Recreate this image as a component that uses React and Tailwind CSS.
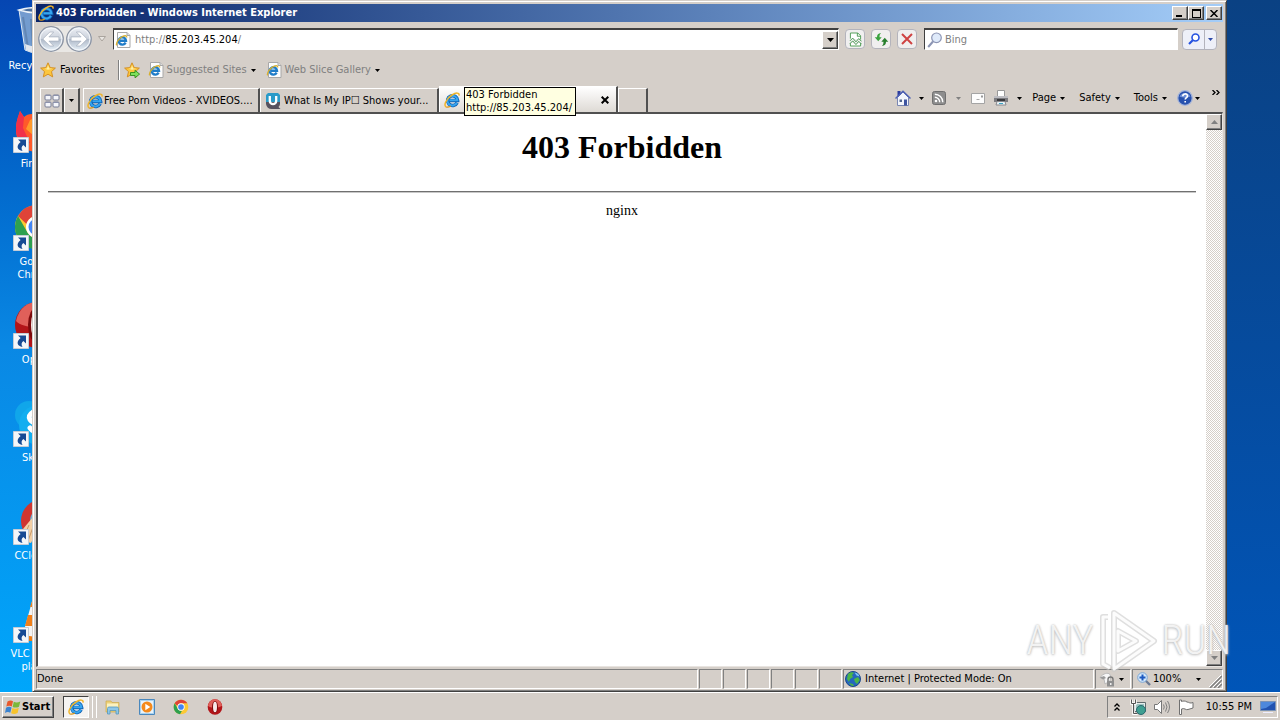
/**
 * Classic Windows desktop with an Internet Explorer window
 */
import { useId } from 'react';

const raised =
  'border border-t-white border-l-white border-r-[#404040] border-b-[#404040] bg-[#d5cfc9] shadow-[inset_-1px_-1px_0_#808080]';
const sunken = 'border border-t-[#808080] border-l-[#808080] border-r-white border-b-white';
const softButton =
  'flex h-5 w-5 items-center justify-center rounded-sm border border-[#b4b4bc] bg-[#f0efef]';

/* ---------- icons ---------- */

const IeIcon = ({ className = 'h-4 w-4' }) => (
  <svg viewBox="0 0 16 16" className={`shrink-0 ${className}`} aria-hidden="true">
    <path d="M13.1 10.8A5 4.900 0 1 1 13.600 8.500H5.500" fill="none" stroke="#0f62b4" strokeWidth="3.600" />
    <path d="M12.900 10.800A5 4.900 0 1 1 13.400 8.300H5.500" fill="none" stroke="#36a6f0" strokeWidth="2" />
    <path
      d="M2.200 15C-1 13.600 2.500 6.500 8 3c4-2.600 7.600-2.600 7 .6"
      fill="none"
      stroke="#f0b429"
      strokeWidth="1.500"
    />
    <path d="M2.200 15c1.600.6 3.300-.2 4.600-1" fill="none" stroke="#d8951b" strokeWidth="1.200" />
  </svg>
);

const PageIeIcon = () => (
  <svg viewBox="0 0 16 16" className="h-4 w-4 shrink-0" aria-hidden="true">
    <path d="M2.500.5h9.500l3 3v12h-12.500z" fill="#fdfdfd" stroke="#a8a8a8" />
    <path d="M12 .5V3.500h3" fill="#ddd" stroke="#a8a8a8" />
    <path d="M10.600 10.600A3.700 3.700 0 1 1 11 8.700H5" fill="none" stroke="#1f7cc8" strokeWidth="2.400" />
    <path d="M1.700 13.300c-1.400-2 2.500-7.700 6.500-9.200 2.500-.8 3.800-.2 3.400 1.400" fill="none" stroke="#d8b02f" strokeWidth="1.300" />
  </svg>
);

const Caret = ({ className = 'text-black' }) => (
  <svg viewBox="0 0 5 3" className={`h-[3px] w-[5px] shrink-0 ${className}`} aria-hidden="true">
    <path d="M0 0h5L2.500 3z" fill="currentColor" />
  </svg>
);

const NavArrow = ({ flip }) => {
  const id = useId();
  return (
    <svg viewBox="0 0 26 26" className={`h-[26px] w-[26px] ${flip ? '-scale-x-100' : ''}`} aria-hidden="true">
      <defs>
        <linearGradient id={id} x1="0" y1="0" x2="0" y2="1">
          <stop offset="0" stopColor="#eef1f6" />
          <stop offset=".48" stopColor="#ccd2dc" />
          <stop offset=".52" stopColor="#b0bac9" />
          <stop offset="1" stopColor="#e9f3fa" />
        </linearGradient>
      </defs>
      <circle cx="13" cy="13" r="12.300" fill={`url(#${id})`} stroke="#8b93a2" strokeWidth="1.200" />
      <circle cx="13" cy="13" r="10.900" fill="none" stroke="#f5f8fb" strokeWidth="1" />
      <path
        d="M4.800 13l7-7h3.900l-4.800 4.900h10v4.200h-10l4.800 4.900h-3.900z"
        fill="#fff"
        stroke="#a4adbc"
        strokeWidth=".7"
      />
    </svg>
  );
};

const StarIcon = ({ arrow }) => (
  <svg viewBox="0 0 16 16" className="h-4 w-4 shrink-0" aria-hidden="true">
    <path
      d="M8 .8l2.200 4.800 5.200.5-3.900 3.500 1.200 5.300L8 12.200l-4.700 2.700 1.200-5.300L.6 6.100l5.200-.5z"
      fill="#fcc63d"
      stroke="#d38a1c"
      strokeWidth=".9"
    />
    <path d="M8 3l1.200 3.400 3.300.4-4.500.9-3.700-.9 2.700-.4z" fill="#fff0a8" />
    {arrow && (
      <path d="M6.500 10.500h4.500V8.300l4.600 3.800-4.600 3.700v-2.300H6.500z" fill="#7fe05c" stroke="#2b8c1d" strokeWidth=".9" />
    )}
  </svg>
);

const QuickTabsIcon = () => (
  <svg viewBox="0 0 16 14" className="h-[14px] w-4" aria-hidden="true">
    {[[1, 1], [9, 1], [1, 8], [9, 8]].map(([x, y]) => (
      <g key={`${x}-${y}`}>
        <rect x={x} y={y} width="6" height="5" rx="1" fill="#f4f5fa" stroke="#777d95" />
        <path d={`M${x} ${y + 0.5}h6`} stroke="#8d93ad" />
      </g>
    ))}
  </svg>
);

const UIcon = () => (
  <svg viewBox="0 0 16 16" className="h-4 w-4 shrink-0" aria-hidden="true">
    <path d="M3 1h10l2 2v8a5 5 0 0 1-1.500 3L15.500 16H7a6 6 0 0 1-6-5V3z" fill="#56525f" />
    <path d="M3 0h10l2 2v7H1V2z" fill="#2a9bc9" />
    <path d="M4.800 12V7a3.200 3.200 0 0 1 6.400 0v5" fill="none" stroke="#fff" strokeWidth="2.300" transform="rotate(180 8 7.500)" />
  </svg>
);

const CompatIcon = () => (
  <svg viewBox="0 0 14 16" className="h-[15px] w-[13px]" aria-hidden="true">
    <path d="M1.500 7V1h8l3 3v4M1.500 12v3h11v-3" fill="#fff" stroke="#4b9b51" />
    <path d="M9 1v3.500h3.500" fill="none" stroke="#4b9b51" />
    <path d="M1 9.500l3-3 3.500 4 3-3.500 3 3M1 12.500l3-3 3.500 4 3-3.500 3 3" fill="none" stroke="#3c9146" />
  </svg>
);

const RefreshIcon = () => (
  <svg viewBox="0 0 16 16" className="h-[15px] w-[15px]" aria-hidden="true">
    <path d="M7.500 1C4.500 1.200 3.200 2.800 3.200 5.500H.8l3.700 4.300 3.700-4.300H5.900C5.800 3.400 6.300 2.300 7.500 1z" fill="#3aa33f" />
    <path d="M8.500 14.800c3-.2 4.300-1.800 4.300-4.500h2.400L11.500 6l-3.700 4.300h2.300c.1 2.100-.4 3.200-1.600 4.500z" fill="#277f2e" />
  </svg>
);

const StopIcon = () => (
  <svg viewBox="0 0 12 12" className="h-3 w-3" aria-hidden="true">
    <path d="M1 1l10 10M11 1L1 11" stroke="#cf4343" strokeWidth="2" />
  </svg>
);

const Magnifier = ({ stroke, fill }) => (
  <svg viewBox="0 0 16 16" className="h-4 w-4 shrink-0" aria-hidden="true">
    <path d="M6 9.500L1.200 15" stroke={stroke} strokeWidth="2" />
    <circle cx="9.500" cy="5.800" r="4.800" fill={fill} stroke={stroke} strokeWidth="1.200" />
  </svg>
);

const HomeIcon = () => (
  <svg viewBox="0 0 16 16" className="h-4 w-4" aria-hidden="true">
    <path d="M2.500 7.500v8h11v-8L8 2z" fill="#f3f6fc" stroke="#7986b2" />
    <path d="M2.500 1h3v3l-3 3z" fill="#2b3da0" />
    <path d="M.5 8.500L8 1.200l7.500 7.300" fill="none" stroke="#4d60b4" strokeWidth="1.500" />
    <path d="M9 9.500h3v6H9z" fill="#3f55a0" />
    <path d="M4.500 9.500h2.500v2.500H4.500z" fill="#53678f" />
  </svg>
);

const FeedIcon = () => (
  <svg viewBox="0 0 14 14" className="h-[14px] w-[14px]" aria-hidden="true">
    <rect x=".5" y=".5" width="13" height="13" rx="2" fill="#8d8d8d" stroke="#6f6f6f" />
    <circle cx="4" cy="10" r="1.300" fill="#fff" />
    <path d="M2.800 6.300a4.900 4.900 0 0 1 4.900 4.900M2.800 3.200a8 8 0 0 1 8 8" fill="none" stroke="#fff" strokeWidth="1.400" />
  </svg>
);

const MailIcon = () => (
  <svg viewBox="0 0 14 11" className="h-[11px] w-[14px]" aria-hidden="true">
    <path d="M.5.5h13v10H.5z" fill="#fdfdfd" stroke="#a4a4a4" />
    <path d="M10 2.500h2v2h-2z" fill="#999" />
    <path d="M5.500 6.500h3" stroke="#aaa" />
  </svg>
);

const PrinterIcon = () => (
  <svg viewBox="0 0 16 16" className="h-4 w-4" aria-hidden="true">
    <path d="M4.500.5h7v6h-7z" fill="#fff" stroke="#9a9a9a" />
    <path d="M1 6h14v6H1z" fill="#7c7c80" />
    <path d="M1 6h14v2H1z" fill="#bdbdc2" />
    <path d="M4 9h8v2H4z" fill="#3a3a3d" />
    <path d="M4 11.500h8l1 3.500H3z" fill="#e9f3f7" stroke="#8a8a8e" />
    <path d="M6 13.500h4" stroke="#3fa4c4" />
  </svg>
);

const HelpIcon = () => (
  <svg viewBox="0 0 16 16" className="h-4 w-4" aria-hidden="true">
    <circle cx="8" cy="8" r="7.300" fill="#2751ae" stroke="#a4b4da" strokeWidth="1.300" />
    <path d="M2.500 6.500a6 6 0 0 1 11 0c-3 1.500-8 1.500-11 0z" fill="#6d8fd8" />
    <path d="M5.800 6.200c0-3 4.700-3 4.700-.2 0 1.600-2.300 1.700-2.300 3.600M8.200 11v1.600" fill="none" stroke="#fff" strokeWidth="1.600" />
  </svg>
);

const GlobeIcon = () => (
  <svg viewBox="0 0 16 16" className="h-4 w-4 shrink-0" aria-hidden="true">
    <circle cx="8" cy="8" r="7.500" fill="#2567bd" stroke="#1c478a" />
    <path d="M3 3c2-2 5-2 6-1L7 4l1 2-3 2-1 3-2-3zM9 8l4-2 1.800 3-2.800 4-2-2z" fill="#4cb648" />
    <path d="M9.500 1.500c3 .5 4.500 2 5 4l-3-1z" fill="#7fc5f3" />
    <path d="M4 12l4 1 1 2c-2 .3-4-1-5-3z" fill="#4cb648" />
  </svg>
);

const LockEyeIcon = () => (
  <svg viewBox="0 0 16 16" className="h-4 w-4 shrink-0" aria-hidden="true">
    <path d="M1 6.500C4 2.500 9 1 11 3.500c1 2 .5 4 0 6.500L6 13 5 8z" fill="#f6f6f6" stroke="#b9b9b9" />
    <path d="M1 6.500l4-1.500 2 2-3 1.500z" fill="#999" />
    <path d="M9 10V8.500a2.500 2.500 0 0 1 5 0V10" fill="none" stroke="#777" strokeWidth="1.400" />
    <path d="M8 10h7v5.500H8z" fill="#8f8f8f" />
    <path d="M11 12h1.500v2H11z" fill="#eee" />
  </svg>
);

const ZoomIcon = () => (
  <svg viewBox="0 0 14 14" className="h-[14px] w-[14px]" aria-hidden="true">
    <path d="M8.500 8.500l4.500 4.500" stroke="#6c7a94" strokeWidth="2.400" />
    <circle cx="5.500" cy="5.500" r="4.800" fill="#d5e9fb" stroke="#7aa5d5" />
    <path d="M5.500 2.500v6M2.500 5.500h6" stroke="#1f5ac0" strokeWidth="2" />
  </svg>
);

const WindowsFlag = () => (
  <svg viewBox="0 0 16 16" className="h-4 w-4 shrink-0" aria-hidden="true">
    <path d="M2.500 2.500C4.500 1 6.500 1.200 8 2.200L6.800 7.500C5.200 6.600 3.300 6.600 1.300 7.600z" fill="#e8582c" />
    <path d="M8.800 2.700c2 1 4 .9 6.500-.3L14 7.700c-2 1.100-4.400 1.200-6.400.2z" fill="#7bb83a" />
    <path d="M1 8.700c2-1.100 4-1.100 5.600-.1L5.300 13.800c-1.500-1-3.500-1-5.300.1z" fill="#3a83d0" />
    <path d="M7.400 9c2 1 4.200.9 6.400-.2l-1.200 5.200c-2.300 1.200-4.600 1.200-6.500.2z" fill="#f7c32c" />
  </svg>
);

const ExplorerIcon = () => (
  <svg viewBox="0 0 16 16" className="h-4 w-4" aria-hidden="true">
    <path d="M1 2h5l1 1.500h7V13H1z" fill="#ecd078" stroke="#cda94c" strokeWidth=".7" />
    <path d="M2 4.500h11V10H2z" fill="#fbf2c0" />
    <path d="M2.500 15V9.500q0-1.500 1.500-1.500h8q1.500 0 1.500 1.500V15h-2.500v-3.500H5V15z" fill="#8dc7e8" stroke="#5697bd" strokeWidth=".8" />
  </svg>
);

const PlayerIcon = () => (
  <svg viewBox="0 0 16 16" className="h-4 w-4" aria-hidden="true">
    <path d="M.5.5h15v15H.5z" fill="#a9d3f0" stroke="#4a88bd" />
    <path d="M2 2h12v12H2z" fill="#e8f3fb" />
    <circle cx="8" cy="8" r="5.500" fill="#f48a1c" />
    <path d="M6.300 4.800L11.300 8l-5 3.200z" fill="#fff" />
  </svg>
);

const ChromeIcon = ({ className = 'h-4 w-4' }) => (
  <svg viewBox="0 0 48 48" className={className} aria-hidden="true">
    <circle cx="24" cy="24" r="22" fill="#fcc934" />
    <path d="M24 2a22 22 0 0 1 19 11H24a11 11 0 0 0-10.500 8L5 13A22 22 0 0 1 24 2z" fill="#df4338" />
    <path d="M5 13l9.500 16.500A11 11 0 0 0 27 35l-6 11A22 22 0 0 1 5 13z" fill="#2ea04f" />
    <circle cx="24" cy="24" r="11" fill="#fff" />
    <circle cx="24" cy="24" r="8.500" fill="#4285f4" />
  </svg>
);

const OperaIcon = ({ className = 'h-4 w-4' }) => (
  <svg viewBox="0 0 48 48" className={className} aria-hidden="true">
    <ellipse cx="24" cy="24" rx="22" ry="23" fill="#b31519" />
    <path d="M3 20C6 6 16 1 24 1s18 5 21 19c-8 7-34 9-42 0z" fill="#e0605a" />
    <ellipse cx="24" cy="24" rx="9" ry="18" fill="#7c0a0c" />
    <ellipse cx="24" cy="24" rx="6" ry="16" fill="#f7e9e8" />
  </svg>
);

const BinIcon = () => (
  <svg viewBox="0 0 48 48" className="h-12 w-12" aria-hidden="true">
    <path d="M6 3h36l-5 40q-13 6-25 0z" fill="#8fb0d6" fillOpacity=".8" stroke="#dfeaf4" />
    <path d="M6 3q18-5 36 0-18 6-36 0z" fill="#4a6f9f" stroke="#eef4fa" strokeWidth="1.500" />
    <path d="M10 10l5 31M18 12l2 30" stroke="#6286b4" strokeWidth="2" />
    <path d="M12 37q12 5 25 0l-1 6q-12 6-23 0z" fill="#e2e7ee" />
  </svg>
);

const FirefoxIcon = () => (
  <svg viewBox="0 0 48 48" className="h-12 w-12" aria-hidden="true">
    <path d="M7 6l4 6q3-3 8-3l2-6q3 3 5 6c12 0 20 8 20 18S36 47 24 47 3 38 3 25C3 17 5 12 7 6z" fill="#ff5a2a" />
    <path d="M3 25c0-8 2-13 4-19l4 6-1 11 7 15C7 37 3 32 3 25z" fill="#f0304a" />
    <path d="M17 15l9-4-5 9 6 5-6 6-8-7z" fill="#ff9a2b" />
    <circle cx="29" cy="27" r="8" fill="#a3308c" />
  </svg>
);

const SkypeIcon = () => (
  <svg viewBox="0 0 48 48" className="h-12 w-12" aria-hidden="true">
    <circle cx="16" cy="16" r="14" fill="#10a6ea" />
    <circle cx="26" cy="26" r="20" fill="#12aef0" />
    <path d="M34 16q-6-6-14-3c-8 5-2 11 6 12s8 8-1 8q-5 0-8-4" fill="none" stroke="#fff" strokeWidth="5" strokeLinecap="round" />
  </svg>
);

const CleanerIcon = () => (
  <svg viewBox="0 0 48 48" className="h-12 w-12" aria-hidden="true">
    <circle cx="30" cy="24" r="22" fill="#cf3530" />
    <circle cx="30" cy="24" r="13" fill="#6db1d8" />
    <path d="M20 20l8 6-10 20-15-4q8-12 17-22z" fill="#f3cfa5" />
    <path d="M16 28l-6 14M20 30l-5 14" stroke="#c99a68" />
  </svg>
);

const VlcIcon = () => (
  <svg viewBox="0 0 48 48" className="h-12 w-12" aria-hidden="true">
    <path d="M5 46l4-10h30l4 10z" fill="#ef7d14" />
    <path d="M20 3h8l10 36q-14 6-28 0z" fill="#f4f4f4" />
    <path d="M20 3h8l3 9H17zM15 20h18l3 11H12z" fill="#f0801a" />
  </svg>
);

const ShortcutArrow = () => (
  <svg viewBox="0 0 16 16" className="absolute bottom-0 left-0 h-4 w-4" aria-hidden="true">
    <path d="M.5.500h15v15H.5z" fill="#f4f6f9" stroke="#c5ccd6" />
    <path d="M5 2.500h8v8l-2.600-2.600C8.300 9.500 8 11.500 9.500 14 4.500 13.500 2.500 9 7.600 5.100z" fill="#174a94" />
  </svg>
);

/* ---------- desktop ---------- */

const desktopItems = [
  { label: 'Recycle Bin', icon: <BinIcon />, shortcut: false },
  { label: 'Firefox', icon: <FirefoxIcon />, shortcut: true },
  { label: 'Google Chrome', icon: <ChromeIcon className="h-12 w-12" />, shortcut: true },
  { label: 'Opera', icon: <OperaIcon className="h-12 w-12" />, shortcut: true },
  { label: 'Skype', icon: <SkypeIcon />, shortcut: true },
  { label: 'CCleaner', icon: <CleanerIcon />, shortcut: true },
  { label: 'VLC media player', icon: <VlcIcon />, shortcut: true }
];

const DesktopIcons = () => (
  <ul className="flex w-[74px] flex-col text-white">
    {desktopItems.map((item) => (
      <li key={item.label} className="flex h-[98px] flex-col items-center pt-[7px]">
        <span className="relative">
          {item.icon}
          {item.shortcut && <ShortcutArrow />}
        </span>
        <span className="mt-1 px-1 text-center leading-[13px]">{item.label}</span>
      </li>
    ))}
  </ul>
);

/* ---------- browser window ---------- */

const TitleBar = () => (
  <header className="flex h-[18px] items-center bg-linear-to-r from-[#0a246a] to-[#a4cdf8] pr-px pl-0.5 text-white">
    <IeIcon />
    <h1 className="ml-0.5 flex-1 font-bold">403 Forbidden - Windows Internet Explorer</h1>
    <button aria-label="Minimize" className={`flex h-[14px] w-4 items-end justify-start pb-0.5 pl-[3px] ${raised}`}>
      <span className="h-0.5 w-1.5 bg-black" />
    </button>
    <button aria-label="Maximize" className={`flex h-[14px] w-4 items-center justify-center ${raised}`}>
      <span className="h-[9px] w-[9px] border border-t-2 border-black" />
    </button>
    <button aria-label="Close" className={`ml-0.5 flex h-[14px] w-4 items-center justify-center ${raised}`}>
      <svg viewBox="0 0 8 7" className="h-[7px] w-2" aria-hidden="true">
        <path d="M.5 0l7 7M7.500 0l-7 7" stroke="#000" strokeWidth="1.500" />
      </svg>
    </button>
  </header>
);

const AddressRow = () => (
  <div className="flex h-[34px] items-center pr-1.5 pl-0.5">
    <div className="flex items-center gap-0.5 rounded-full bg-[#e9e7e4]">
      <button aria-label="Back"><NavArrow /></button>
      <button aria-label="Forward"><NavArrow flip /></button>
    </div>
    <button aria-label="Recent pages" className="ml-0.5 flex w-4 justify-center">
      <svg viewBox="0 0 8 6" className="h-1.5 w-2" aria-hidden="true">
        <path d="M.5.500h7L4 5z" fill="#e9e6e2" stroke="#aaa49e" />
      </svg>
    </button>
    <div className="ml-[3px] flex h-[22px] flex-1 items-center border border-t-2 border-t-[#404040] border-l-[#404040] border-r-white border-b-white bg-white pl-px text-[#808080]">
      <PageIeIcon />
      <label htmlFor="address" className="ml-1">http://</label>
      <input id="address" defaultValue="85.203.45.204" className="field-sizing-content text-black outline-none" />
      <span className="flex-1">/</span>
      <button aria-label="Show address list" className={`flex h-[18px] w-4 items-center justify-center ${raised}`}>
        <svg viewBox="0 0 7 4" className="h-1 w-[7px]" aria-hidden="true"><path d="M0 0h7L3.500 4z" /></svg>
      </button>
    </div>
    <div className="ml-1.5 flex gap-1.5">
      <button aria-label="Compatibility view" className={softButton}><CompatIcon /></button>
      <button aria-label="Refresh" className={softButton}><RefreshIcon /></button>
      <button aria-label="Stop" className={softButton}><StopIcon /></button>
    </div>
    <div className="ml-[7px] flex h-[22px] w-[254px] items-center border border-t-2 border-t-[#404040] border-l-[#404040] border-r-white border-b-white bg-white pl-0.5">
      <Magnifier stroke="#8c95b4" fill="#dfeafa" />
      <input aria-label="Search" placeholder="Bing" className="ml-0.5 min-w-0 flex-1 outline-none placeholder:text-[#808080]" />
    </div>
    <div className="ml-1 flex h-[21px] rounded-sm border border-[#b4b4bc] bg-[#eef0f8]">
      <button aria-label="Search the web" className="flex w-[21px] items-center justify-center">
        <svg viewBox="0 0 12 12" className="h-3 w-3" aria-hidden="true">
          <path d="M5 7L1 11" stroke="#2552e0" strokeWidth="2.200" />
          <circle cx="7.500" cy="4.500" r="3.500" fill="#fff" stroke="#2552e0" strokeWidth="1.600" />
        </svg>
      </button>
      <button aria-label="Search options" className="flex w-3 items-center justify-center border-l border-[#b4b4bc]">
        <Caret className="text-[#2f4aa8]" />
      </button>
    </div>
  </div>
);

const FavoritesBar = () => (
  <div className="flex h-7 items-center pl-1">
    <button className="flex items-center gap-1"><StarIcon />Favorites</button>
    <span className="ml-[13px] h-5 w-0.5 border-l border-[#808080] bg-white" />
    <button aria-label="Add to favorites bar" className="ml-1"><StarIcon arrow /></button>
    <button className="ml-2 flex items-center text-[#808080]">
      <PageIeIcon />
      <span className="mr-1 ml-[3px]">Suggested Sites</span>
      <Caret />
    </button>
    <button className="ml-2.5 flex items-center text-[#808080]">
      <PageIeIcon />
      <span className="mr-1 ml-[3px]">Web Slice Gallery</span>
      <Caret />
    </button>
  </div>
);

const tabEdge = 'border-t border-l border-r-2 border-t-white border-l-white border-r-[#505050]';

const TabRow = () => (
  <div className="flex h-7 items-end pl-1">
    <button aria-label="Quick tabs" className={`flex h-6 w-6 items-center justify-center ${tabEdge}`}><QuickTabsIcon /></button>
    <button aria-label="Tab list" className={`flex h-6 w-4 items-center justify-center ${tabEdge}`}><Caret /></button>
    <nav className="ml-[3px] flex items-end" aria-label="Tabs">
      <button className={`flex h-6 w-[177px] items-center gap-px pl-[3px] ${tabEdge}`}>
        <IeIcon />
        <span className="whitespace-nowrap">Free Porn Videos - XVIDEOS....</span>
      </button>
      <button className={`flex h-6 w-[179px] items-center gap-[3px] pl-1 ${tabEdge}`}>
        <UIcon />
        <span className="whitespace-nowrap">What Is My IP☐ Shows your...</span>
      </button>
      <div className={`relative flex h-[26px] w-[179px] items-center bg-linear-to-b from-white to-[#dedad5] pr-[7px] pl-1 ${tabEdge}`}>
        <button className="flex flex-1 items-center" aria-label="403 Forbidden"><IeIcon /></button>
        <button aria-label="Close tab">
          <svg viewBox="0 0 8 8" className="h-2 w-2" aria-hidden="true">
            <path d="M.7.7l6.600 6.600M7.300.7L.7 7.300" stroke="#000" strokeWidth="2" />
          </svg>
        </button>
        <div role="tooltip" className="absolute top-0 left-6 z-10 h-[29px] border border-black bg-[#ffffe1] pr-[3px] pl-px leading-[13px] whitespace-nowrap">
          403 Forbidden<br />http://85.203.45.204/
        </div>
      </div>
      <button aria-label="New tab" className={`h-6 w-[30px] ${tabEdge}`} />
    </nav>
    <div className="relative ml-auto flex h-7 items-center pr-[23px]">
      <button aria-label="Home" className="flex items-center gap-2"><HomeIcon /><Caret /></button>
      <button aria-label="Feeds" className="ml-2 flex items-center gap-2.5"><FeedIcon /><Caret className="text-[#808080]" /></button>
      <button aria-label="Read mail" className="ml-2.5"><MailIcon /></button>
      <button aria-label="Print" className="ml-2 flex items-center gap-2"><PrinterIcon /><Caret /></button>
      <button className="ml-2.5 flex items-center gap-1">Page<Caret /></button>
      <button className="ml-3.5 flex items-center gap-1">Safety<Caret /></button>
      <button className="ml-3.5 flex items-center gap-1">Tools<Caret /></button>
      <button aria-label="Help" className="ml-2.5 flex items-center gap-0.5"><HelpIcon /><Caret /></button>
      <button aria-label="More commands" className="absolute top-1.5 right-[3px]">
        <svg viewBox="0 0 8 5" className="h-[5px] w-2" aria-hidden="true">
          <path d="M.5 0L3 2.500.5 5M4.500 0L7 2.500 4.500 5" fill="none" stroke="#000" strokeWidth="1.300" />
        </svg>
      </button>
    </div>
  </div>
);

const ScrollBar = () => (
  <div className="flex w-4 flex-col justify-between bg-[repeating-conic-gradient(#ffffff_0_25%,#d5cfc9_0_50%)] bg-size-[2px_2px]">
    <button aria-label="Scroll up" className={`flex h-4 w-4 items-center justify-center ${raised}`}>
      <svg viewBox="0 0 7 4" className="h-1 w-[7px]" aria-hidden="true"><path d="M0 4h7L3.500 0z" fill="#808080" /></svg>
    </button>
    <button aria-label="Scroll down" className={`flex h-4 w-4 items-center justify-center ${raised}`}>
      <svg viewBox="0 0 7 4" className="h-1 w-[7px]" aria-hidden="true"><path d="M0 0h7L3.500 4z" fill="#808080" /></svg>
    </button>
  </div>
);

const PageView = () => (
  <main className="flex min-h-0 flex-1 border border-t-2 border-l-2 border-t-[#505050] border-l-[#505050] border-r-[#e8e4e0] border-b-[#e8e4e0] bg-white">
    <div className="flex-1 px-2.5 pt-[15px] text-center font-['Liberation_Serif',serif] text-black">
      <h2 className="text-[32px] leading-9 font-bold">403 Forbidden</h2>
      <hr className="mt-[26px] border-t border-b border-t-[#707070] border-b-[#c8c8c8]" />
      <p className="mt-2.5 text-sm leading-4">nginx</p>
    </div>
    <ScrollBar />
  </main>
);

const StatusBar = () => (
  <footer className="mt-0.5 flex h-5 gap-px">
    <div className={`flex flex-1 items-center ${sunken}`}>Done</div>
    {[0, 1, 2, 3, 4, 5].map((i) => (
      <div key={i} className={`w-[23px] ${sunken}`} />
    ))}
    <div className={`flex w-[251px] items-center gap-1 pl-px ${sunken}`}>
      <GlobeIcon />
      Internet | Protected Mode: On
    </div>
    <button aria-label="Privacy report" className={`flex w-9 items-center gap-1 pl-[3px] ${sunken}`}>
      <LockEyeIcon /><Caret />
    </button>
    <div className={`flex w-[91px] items-center ${sunken}`}>
      <button className="flex flex-1 items-center gap-0.5 pl-1"><ZoomIcon />100%</button>
      <button aria-label="Zoom level" className="mr-2"><Caret /></button>
      <svg viewBox="0 0 13 13" className="h-[13px] w-[13px] self-end" aria-hidden="true">
        <path d="M1 13L13 1M5 13l8-8M9 13l4-4" stroke="#808080" strokeWidth="1.500" />
        <path d="M0 12L12 0M4 12l8-8M8 12l4-4" stroke="#fff" />
      </svg>
    </div>
  </footer>
);

const BrowserWindow = () => (
  <section className="absolute top-0 right-[53px] bottom-0 left-8 flex flex-col border border-t-[#d5cfc9] border-l-[#d5cfc9] border-r-[#404040] border-b-[#404040] bg-[#d5cfc9] px-[3px] pt-[3px] pb-0.5 shadow-[inset_1px_1px_0_#ffffff,inset_-1px_-1px_0_#808080]">
    <TitleBar />
    <AddressRow />
    <FavoritesBar />
    <TabRow />
    <PageView />
    <StatusBar />
  </section>
);

/* ---------- taskbar ---------- */

const Taskbar = () => (
  <footer className="flex h-7 shrink-0 items-center border-t border-white bg-[#d5cfc9] pr-0.5 pl-0.5">
    <button className={`flex h-[22px] w-[52px] items-center gap-px pl-0.5 font-bold ${raised}`}>
      <WindowsFlag />Start
    </button>
    <button aria-label="Internet Explorer" className="ml-[9px] flex h-[22px] w-[26px] items-center justify-center border border-t-[#404040] border-l-[#404040] border-r-white border-b-white bg-[#f5f3f1]">
      <IeIcon />
    </button>
    <span className="h-[22px] w-1 border-r border-white" />
    <span className="h-[22px] w-1 border-r border-white" />
    <div className="ml-2 flex gap-[18px]">
      <button aria-label="Windows Explorer"><ExplorerIcon /></button>
      <button aria-label="Media Player"><PlayerIcon /></button>
      <button aria-label="Google Chrome"><ChromeIcon /></button>
      <button aria-label="Opera"><OperaIcon /></button>
    </div>
    <div className={`ml-auto flex h-[22px] items-center pr-px pl-1.5 ${sunken}`}>
      <button aria-label="Show hidden icons">
        <svg viewBox="0 0 6 8" className="h-2 w-1.5" aria-hidden="true">
          <path d="M.5 3.500L3 1l2.500 2.500M.5 7.500L3 5l2.500 2.500" fill="none" stroke="#000" strokeWidth="1.300" />
        </svg>
      </button>
      <svg viewBox="0 0 16 16" className="ml-2.5 h-4 w-4" aria-hidden="true">
        <path d="M4.500 3.500h11v9h-11z" fill="#e6eceb" stroke="#5f6b6d" />
        <path d="M6 5h8v6H6z" fill="#9bc4c1" />
        <path d="M1.500.5v4h4v-4M3.500 4.500v11h4" fill="none" stroke="#fff" strokeWidth="2.500" />
        <path d="M1.500.5v4h4v-4M3.500 4.500v10h4" fill="none" stroke="#555" />
        <circle cx="11" cy="11" r="4.500" fill="#3f9f91" stroke="#2c6a70" />
      </svg>
      <svg viewBox="0 0 16 16" className="ml-2 h-4 w-4" aria-hidden="true">
        <path d="M.5 5.500h3l4-4v13l-4-4h-3z" fill="#fff" stroke="#777" />
        <path d="M9.500 5.500q1.500 2.500 0 5M11.500 3.500q3 4.500 0 9M13.500 2q4 6 0 12" fill="none" stroke="#808080" />
      </svg>
      <svg viewBox="0 0 16 16" className="ml-2 h-4 w-4" aria-hidden="true">
        <path d="M1.500 1v14.500h2V10c3-1.500 4.500 1.500 6.500.5l5-1.500V3.500c-3 1.500-4-.5-6-.5-2-1.500-4-1-5.500-.5V1z" fill="#fff" stroke="#707070" />
      </svg>
      <time className="ml-3">10:55 PM</time>
      <svg viewBox="0 0 16 14" className="ml-2 h-[14px] w-4" aria-hidden="true">
        <path d="M.5 1.500h15v9H.5z" fill="#2253b0" stroke="#7b93b5" />
        <path d="M1 2h14L6 8l-5 1z" fill="#4d88dc" />
        <path d="M3 12.500h10" stroke="#eef" />
      </svg>
    </div>
  </footer>
);

const Watermark = () => (
  <div className="pointer-events-none absolute right-[49px] bottom-[47px] z-20 flex items-center gap-1 font-['Roboto_Condensed','Liberation_Sans_Narrow',sans-serif] text-[40px] leading-none font-light text-white/80 [text-shadow:0_0_2px_#b4b4b4,0_1px_3px_#c8c8c8]">
    <span>ANY</span>
    <svg viewBox="0 0 60 64" className="h-16 w-[60px]" aria-hidden="true">
      <g fill="none" strokeLinejoin="round">
        <path d="M16 4l40 28-40 28zM20 22v20l18-10zM10 8H5v47l7 4" stroke="#c9c9c9" strokeOpacity=".6" strokeWidth="6" />
        <path d="M16 4l40 28-40 28zM20 22v20l18-10zM10 8H5v47l7 4" stroke="#fff" strokeOpacity=".9" strokeWidth="3" />
      </g>
    </svg>
    <span>RUN</span>
  </div>
);

const App = () => (
  <div className="flex h-screen flex-col overflow-hidden font-['DejaVu_Sans_Condensed','DejaVu_Sans',sans-serif] text-[11px] leading-4 text-black">
    <div className="relative min-h-0 flex-1 overflow-hidden bg-linear-to-b from-[#0646b2] via-[#0a88e4] to-[#00a6fb]">
      <div className="absolute inset-y-0 right-0 w-1/2 bg-linear-to-b from-[#0a4183] to-[#0055b8]" />
      <DesktopIcons />
      <BrowserWindow />
    </div>
    <Taskbar />
    <Watermark />
  </div>
);

export default App;
